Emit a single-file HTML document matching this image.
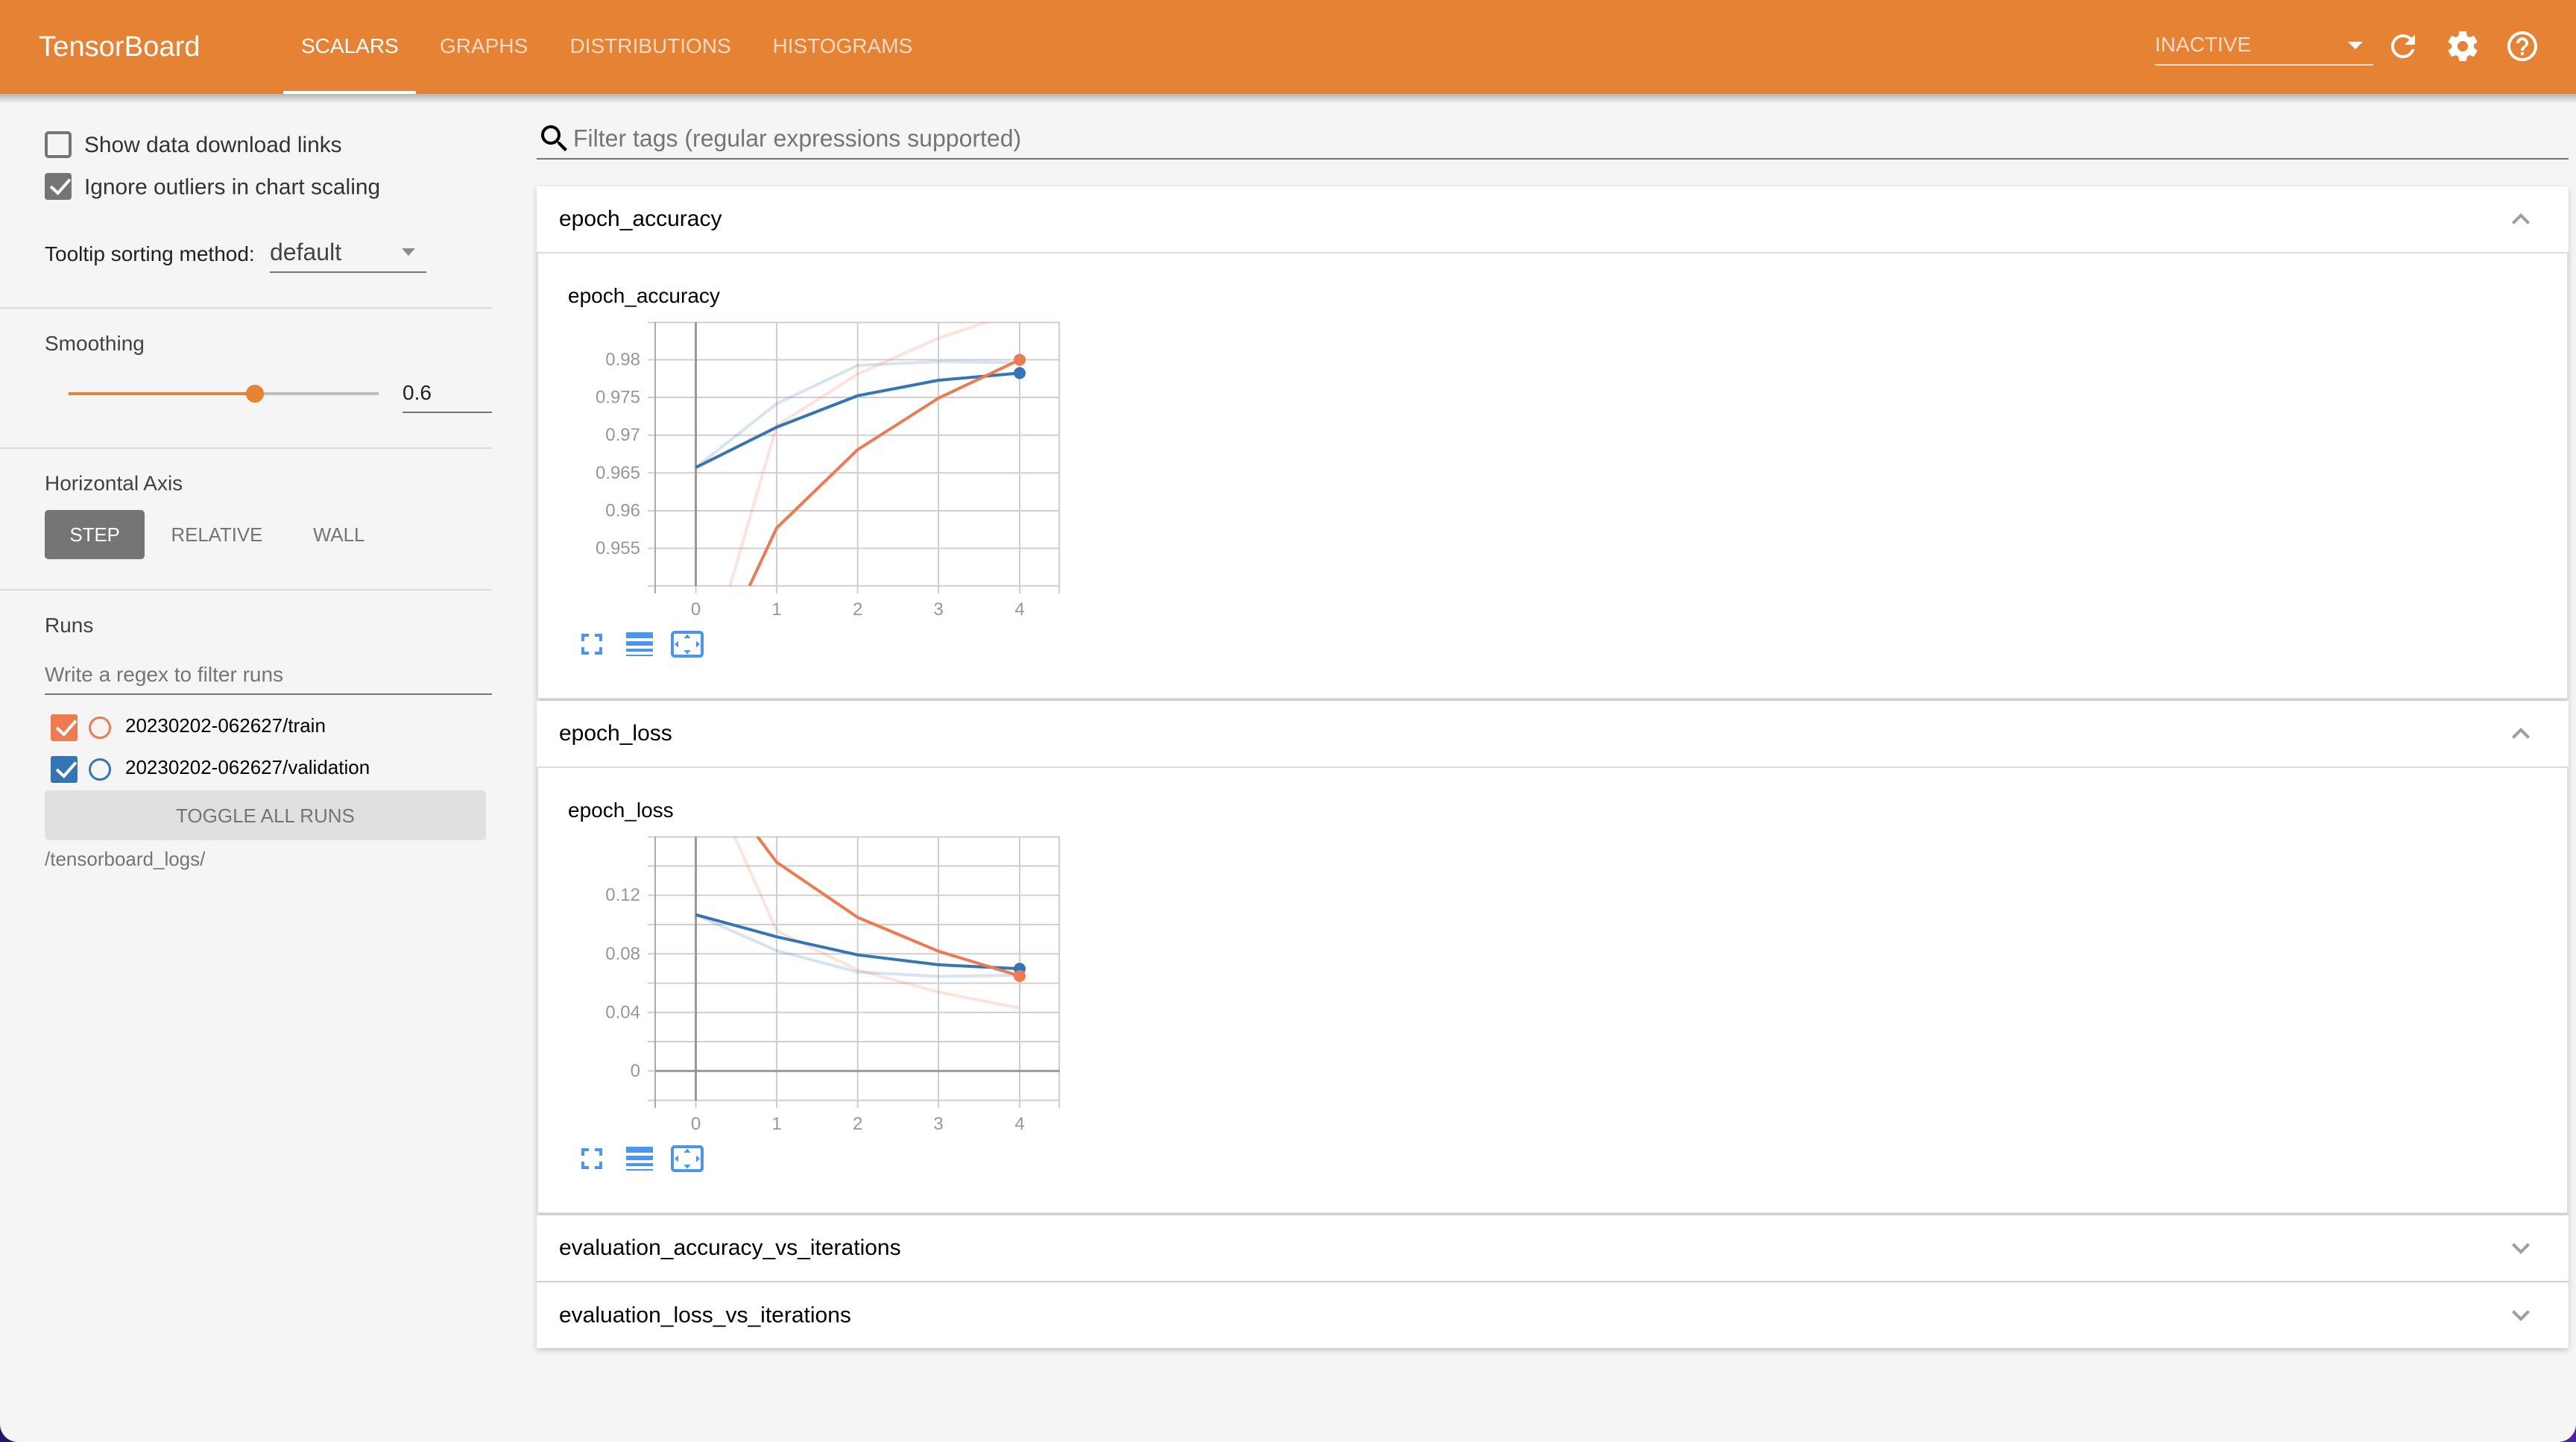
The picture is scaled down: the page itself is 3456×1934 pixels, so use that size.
<!DOCTYPE html>
<html lang="en"><head><meta charset="utf-8"><title>TensorBoard</title>
<style>
html,body{margin:0;padding:0;width:3456px;height:1934px;overflow:hidden;background:#2b1a80}
svg{display:block;position:absolute;left:0;top:0}
text{font-family:"Liberation Sans",Arial,sans-serif;white-space:pre}
.t{font-size:28px;fill:#fff;fill-opacity:.72}
.s{font-size:28px;fill:#424242}
.tick{font-size:24px;fill:#979797}
.h{font-size:30px;fill:#000}
.grid{stroke:#cfcfcf;stroke-width:2;fill:none}
.ln{fill:none;stroke-width:4;stroke-linejoin:round}
.o{stroke:#ee7a50}.b{stroke:#3475b6}
.bg{stroke-opacity:.2}
.ic{fill:#4a95ed}
</style></head><body>
<svg width="3456" height="1934" viewBox="0 0 3456 1934" xmlns="http://www.w3.org/2000/svg">
<defs>
<linearGradient id="corner" x1="0" x2="1" y1="0" y2="0"><stop offset="0" stop-color="#24146e"/><stop offset="1" stop-color="#4a1fb4"/></linearGradient>
<linearGradient id="hs" x1="0" x2="0" y1="0" y2="1"><stop offset="0" stop-color="#b4b4b4"/><stop offset=".5" stop-color="#d4d4d4"/><stop offset="1" stop-color="#ececec"/></linearGradient>
<filter id="sh" x="-2%" y="-20%" width="104%" height="140%"><feDropShadow dx="0" dy="3" stdDeviation="4" flood-color="#000" flood-opacity=".2"/></filter>
<clipPath id="c1"><rect x="869" y="432" width="553" height="354"/></clipPath>
<clipPath id="c2"><rect x="869" y="1122" width="553" height="354"/></clipPath>
<g id="tools">
<path class="ic" transform="translate(770 840) scale(2)" d="M7 14H5v5h5v-2H7v-3zm-2-4h2V7h3V5H5v5zm12 7h-3v2h5v-5h-2v3zM14 5v2h3v3h2V5h-5z"/>
<rect class="ic" x="840" y="848" width="36" height="8"/><rect class="ic" x="840" y="860" width="36" height="6"/><rect class="ic" x="840" y="870" width="36" height="4"/><rect class="ic" x="840" y="878" width="36" height="2"/>
<rect x="902" y="848" width="40" height="32" rx="3" fill="none" stroke="#4a95ed" stroke-width="4"/>
<path class="ic" d="M922 850.5l4.5 5.5h-9zM922 877.5l-4.5-5.5h9zM905 864l5-4.5v9zM939 864l-5-4.5v9z"/>
</g>
</defs>

<rect width="3456" height="1934" fill="url(#corner)"/>
<path d="M0 0H3456V1910a24 24 0 0 1-24 24H24a24 24 0 0 1-24-24Z" fill="#f5f5f5"/>

<!-- header -->
<rect x="0" y="126" width="3456" height="12" fill="url(#hs)"/>
<rect x="0" y="0" width="3456" height="126" fill="#e58233"/>
<text x="52" y="75" font-size="38.200" fill="#fff">TensorBoard</text>
<text x="404" y="71" font-size="28" fill="#fff">SCALARS</text>
<rect x="380" y="122" width="178" height="4" fill="#fff"/>
<text class="t" x="590" y="71">GRAPHS</text>
<text class="t" x="764.500" y="71">DISTRIBUTIONS</text>
<text class="t" x="1036.500" y="71">HISTOGRAMS</text>
<text class="t" x="2891" y="69">INACTIVE</text>
<rect x="2891" y="86" width="293" height="2" fill="#fff" fill-opacity=".72"/>
<path d="M3150 56h20l-10 10z" fill="#fff"/>
<path fill="#fff" transform="translate(3200 38) scale(2)" d="M17.65 6.35C16.2 4.9 14.21 4 12 4c-4.42 0-7.99 3.58-7.99 8s3.57 8 7.99 8c3.73 0 6.84-2.55 7.73-6h-2.08c-.82 2.33-3.04 4-5.65 4-3.31 0-6-2.69-6-6s2.69-6 6-6c1.66 0 3.14.69 4.22 1.78L13 11h7V4l-2.35 2.35z"/>
<path fill="#fff" transform="translate(3280 38) scale(2)" d="M19.43 12.98c.04-.32.07-.64.07-.98s-.03-.66-.07-.98l2.11-1.65c.19-.15.24-.42.12-.64l-2-3.46c-.12-.22-.39-.3-.61-.22l-2.49 1c-.52-.4-1.08-.73-1.69-.98l-.38-2.65C14.46 2.18 14.25 2 14 2h-4c-.25 0-.46.18-.49.42l-.38 2.65c-.61.25-1.17.59-1.69.98l-2.49-1c-.23-.09-.49 0-.61.22l-2 3.46c-.13.22-.07.49.12.64l2.11 1.65c-.04.32-.07.65-.07.98s.03.66.07.98l-2.11 1.65c-.19.15-.24.42-.12.64l2 3.46c.12.22.39.3.61.22l2.49-1c.52.4 1.08.73 1.69.98l.38 2.65c.03.24.24.42.49.42h4c.25 0 .46-.18.49-.42l.38-2.65c.61-.25 1.17-.59 1.69-.98l2.49 1c.23.09.49 0 .61-.22l2-3.46c.12-.22.07-.49-.12-.64l-2.11-1.65zM12 15.5c-1.93 0-3.5-1.57-3.5-3.5s1.57-3.5 3.5-3.5 3.5 1.57 3.5 3.5-1.57 3.5-3.5 3.5z"/>
<path fill="#fff" transform="translate(3360 38) scale(2)" d="M11 18h2v-2h-2v2zm1-16C6.48 2 2 6.48 2 12s4.48 10 10 10 10-4.48 10-10S17.52 2 12 2zm0 18c-4.41 0-8-3.59-8-8s3.59-8 8-8 8 3.59 8 8-3.59 8-8 8zm0-14c-2.21 0-4 1.79-4 4h2c0-1.1.9-2 2-2s2 .9 2 2c0 2-3 1.75-3 5h2c0-2.25 3-2.5 3-5 0-2.21-1.79-4-4-4z"/>

<!-- sidebar -->
<rect x="62" y="178" width="32" height="32" rx="3" fill="none" stroke="#757575" stroke-width="4"/>
<text x="113" y="204" font-size="29.900" fill="#333">Show data download links</text>
<rect x="60" y="232" width="36" height="36" rx="4" fill="#757575"/>
<polyline points="68,250 77.700,259 93.800,240.700" fill="none" stroke="#fff" stroke-width="4"/>
<text x="113" y="260.500" font-size="29.900" fill="#333">Ignore outliers in chart scaling</text>
<text x="60" y="350" font-size="28" fill="#212121">Tooltip sorting method:</text>
<text x="362" y="349" font-size="32" fill="#444">default</text>
<rect x="362" y="364" width="210" height="2" fill="#757575"/>
<path d="M539 333h18l-9 10z" fill="#8a8a8a"/>
<rect x="0" y="412" width="660" height="2" fill="#dcdcdc"/>

<text class="s" x="60" y="470">Smoothing</text>
<rect x="92" y="526" width="416" height="4" fill="#bdbdbd"/>
<rect x="92" y="526" width="250" height="4" fill="#e58233"/>
<circle cx="342" cy="528" r="12" fill="#e58233"/>
<text x="540" y="536" font-size="28" fill="#212121">0.6</text>
<rect x="540" y="552" width="120" height="2" fill="#757575"/>
<rect x="0" y="600" width="660" height="2" fill="#dcdcdc"/>

<text class="s" x="60" y="657.500">Horizontal Axis</text>
<rect x="60" y="684" width="134" height="66" rx="5" fill="#757575"/>
<text x="93.500" y="726" font-size="25.800" fill="#fff">STEP</text>
<text x="229.500" y="726" font-size="25.800" fill="#757575">RELATIVE</text>
<text x="420" y="726" font-size="25.800" fill="#757575">WALL</text>
<rect x="0" y="790" width="660" height="2" fill="#dcdcdc"/>

<text class="s" x="60" y="848">Runs</text>
<text x="60" y="914" font-size="28" fill="#757575">Write a regex to filter runs</text>
<rect x="60" y="930" width="600" height="2" fill="#757575"/>
<rect x="68" y="958" width="36" height="36" rx="3" fill="#ef7a50"/>
<polyline points="76,976 85.700,985 101.800,966.700" fill="none" stroke="#fff" stroke-width="4"/>
<circle cx="134" cy="976" r="13.500" fill="none" stroke="#ef7a50" stroke-width="3"/>
<text x="168" y="982" font-size="26" fill="#000">20230202-062627/train</text>
<rect x="68" y="1014" width="36" height="36" rx="3" fill="#3475b6"/>
<polyline points="76,1032 85.700,1041 101.800,1022.700" fill="none" stroke="#fff" stroke-width="4"/>
<circle cx="134" cy="1032" r="13.500" fill="none" stroke="#3475b6" stroke-width="3"/>
<text x="168" y="1038" font-size="26" fill="#000">20230202-062627/validation</text>
<rect x="60" y="1060" width="592" height="67" rx="5" fill="#e0e0e0"/>
<text x="236" y="1103" font-size="26" fill="#757575">TOGGLE ALL RUNS</text>
<text x="60" y="1161" font-size="26" fill="#757575">/tensorboard_logs/</text>

<!-- filter -->
<path transform="translate(720 162) scale(2)" fill="#000" d="M15.500 14h-.79l-.28-.27C15.410 12.590 16 11.110 16 9.500 16 5.910 13.090 3 9.500 3S3 5.910 3 9.500 5.910 16 9.500 16c1.610 0 3.090-.59 4.230-1.570l.27.28v.79l5 4.990L20.490 19l-4.990-5zm-6 0C7.010 14 5 11.990 5 9.500S7.010 5 9.500 5 14 7.010 14 9.500 11.990 14 9.500 14z"/>
<text x="769" y="196.500" font-size="32" fill="#757575">Filter tags (regular expressions supported)</text>
<rect x="720" y="212" width="2726" height="2" fill="#757575"/>

<!-- cards -->
<g filter="url(#sh)"><rect x="720" y="250" width="2726" height="688" fill="#fff"/></g>
<rect x="721" y="339" width="2724" height="598" fill="#fff" stroke="#ddd" stroke-width="2"/>
<rect x="720" y="338" width="2726" height="2" fill="#ddd"/>
<g filter="url(#sh)"><rect x="720" y="940" width="2726" height="688" fill="#fff"/></g>
<rect x="721" y="1029" width="2724" height="598" fill="#fff" stroke="#ddd" stroke-width="2"/>
<rect x="720" y="1028" width="2726" height="2" fill="#ddd"/>
<g filter="url(#sh)"><rect x="720" y="1630" width="2726" height="178" fill="#fff"/></g>
<rect x="720" y="1718" width="2726" height="2" fill="#d0d0d0"/>

<text class="h" x="750" y="303">epoch_accuracy</text>
<text class="h" x="750" y="993">epoch_loss</text>
<text class="h" x="750" y="1683">evaluation_accuracy_vs_iterations</text>
<text class="h" x="750" y="1773.500">evaluation_loss_vs_iterations</text>
<path fill="#9e9e9e" transform="translate(3358 270) scale(2)" d="M12 8l-6 6 1.410 1.410L12 10.830l4.590 4.580L18 14z"/>
<path fill="#9e9e9e" transform="translate(3358 960) scale(2)" d="M12 8l-6 6 1.410 1.410L12 10.830l4.590 4.580L18 14z"/>
<path fill="#9e9e9e" transform="translate(3358 1650) scale(2)" d="M16.590 8.590L12 13.170 7.410 8.590 6 10l6 6 6-6z"/>
<path fill="#9e9e9e" transform="translate(3358 1740) scale(2)" d="M16.590 8.590L12 13.170 7.410 8.590 6 10l6 6 6-6z"/>

<!-- chart 1 -->
<text x="762" y="406" font-size="28" fill="#000">epoch_accuracy</text>
<g class="grid">
<path d="M869 432.500H1422M869 482.500H1422M869 533H1422M869 583.600H1422M869 634.300H1422M869 685H1422M869 735.400H1422M869 785.700H1422"/>
<path d="M1042 432V796M1150.700 432V796M1259 432V796M1368 432V796M1421 432V796"/>
</g>
<path d="M879 432V796" stroke="#aaa" stroke-width="2"/>
<path d="M933.500 432V786" stroke="#999" stroke-width="3"/>
<path d="M933.500 786V796" stroke="#cfcfcf" stroke-width="2"/>
<g class="tick" text-anchor="end">
<text x="859" y="490">0.98</text><text x="859" y="540.500">0.975</text><text x="859" y="591">0.97</text><text x="859" y="642">0.965</text><text x="859" y="692.500">0.96</text><text x="859" y="743">0.955</text>
</g>
<g class="tick" text-anchor="middle">
<text x="933.500" y="825">0</text><text x="1042" y="825">1</text><text x="1150.700" y="825">2</text><text x="1259" y="825">3</text><text x="1368" y="825">4</text>
</g>
<g clip-path="url(#c1)">
<polyline class="ln b bg" points="933.500,627 1042,541.400 1150.700,490 1259,485 1368,486.400"/>
<polyline class="ln o bg" points="979.400,785.700 1042,570.700 1150.700,501.800 1259,453.600 1368,417"/>
<polyline class="ln b" points="933.500,627 1042,572.900 1150.700,530.700 1259,510 1368,500.400"/>
<polyline class="ln o" points="1005.600,785.700 1042,708 1150.700,603 1259,534 1368,482.500"/>
</g>
<circle cx="1368" cy="500.400" r="8" fill="#3475b6"/>
<circle cx="1368" cy="482.500" r="8" fill="#ee7a50"/>
<use href="#tools"/>

<!-- chart 2 -->
<text x="762" y="1096" font-size="28" fill="#000">epoch_loss</text>
<g class="grid">
<path d="M869 1122.500H1422M869 1161.400H1422M869 1200.700H1422M869 1240H1422M869 1279.300H1422M869 1318.600H1422M869 1357.900H1422M869 1397H1422M869 1475.700H1422"/>
<path d="M1042 1122V1486M1150.700 1122V1486M1259 1122V1486M1368 1122V1486M1421 1122V1486"/>
</g>
<path d="M879 1122V1486" stroke="#aaa" stroke-width="2"/>
<path d="M933.500 1122V1476" stroke="#999" stroke-width="3"/>
<path d="M933.500 1476V1486" stroke="#cfcfcf" stroke-width="2"/>
<path d="M879 1436.400H1422" stroke="#999" stroke-width="3"/>
<path d="M869 1436.400H879" stroke="#cfcfcf" stroke-width="2"/>
<g class="tick" text-anchor="end">
<text x="859" y="1208">0.12</text><text x="859" y="1287">0.08</text><text x="859" y="1365.500">0.04</text><text x="859" y="1444">0</text>
</g>
<g class="tick" text-anchor="middle">
<text x="933.500" y="1515">0</text><text x="1042" y="1515">1</text><text x="1150.700" y="1515">2</text><text x="1259" y="1515">3</text><text x="1368" y="1515">4</text>
</g>
<g clip-path="url(#c2)">
<polyline class="ln b bg" points="933.500,1226.800 1042,1275 1150.700,1303.600 1259,1309.600 1368,1307.900"/>
<polyline class="ln o bg" points="985.400,1121.800 1042,1248.200 1150.700,1301 1259,1330.400 1368,1352.100"/>
<polyline class="ln b" points="933.500,1226.800 1042,1256.400 1150.700,1280.700 1259,1293.900 1368,1299.300"/>
<polyline class="ln o" points="1016,1121.800 1042,1156.400 1150.700,1230.400 1259,1275.700 1368,1308.900"/>
</g>
<circle cx="1368" cy="1299.300" r="8" fill="#3475b6"/>
<circle cx="1368" cy="1309" r="8" fill="#ee7a50"/>
<use href="#tools" transform="translate(0 690)"/>
</svg>
</body></html>
